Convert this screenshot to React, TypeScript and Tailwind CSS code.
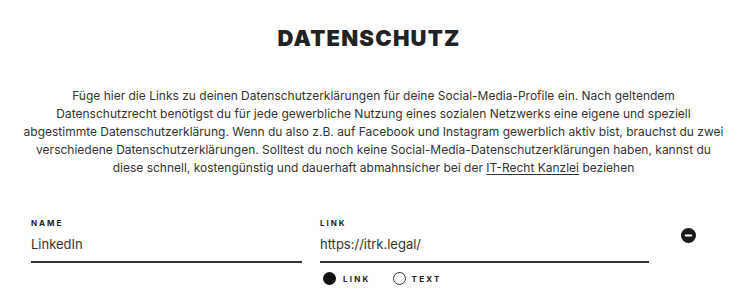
import React from "react";

function MinusCircle() {
  return (
    <svg width="15" height="15" viewBox="0 0 16 16" aria-hidden="true">
      <circle cx="8" cy="8" r="8" fill="#1a1a1a" />
      <rect x="4" y="6.9" width="8" height="2.2" rx="1" fill="#ffffff" />
    </svg>
  );
}

export default function App() {
  return (
    <div className="w-[747px] h-[308px] overflow-hidden bg-white font-['Inter',_'Liberation_Sans',_sans-serif] text-[#333]">
      <h1 className="pt-[26px] pr-[9px] text-center text-[22px] leading-[24px] font-black tracking-[0.055em] text-[#222]">
        DATENSCHUTZ
      </h1>
      <p className="mt-[37px] text-center text-[12px] leading-[18px] text-[#333]">
        Füge hier die Links zu deinen Datenschutzerklärungen für deine Social-Media-Profile ein. Nach geltendem
        <br />
        Datenschutzrecht benötigst du für jede gewerbliche Nutzung eines sozialen Netzwerks eine eigene und speziell
        <br />
        abgestimmte Datenschutzerklärung. Wenn du also z.B. auf Facebook und Instagram gewerblich aktiv bist, brauchst du zwei
        <br />
        verschiedene Datenschutzerklärungen. Solltest du noch keine Social-Media-Datenschutzerklärungen haben, kannst du
        <br />
        diese schnell, kostengünstig und dauerhaft abmahnsicher bei der{" "}
        <a className="underline underline-offset-2">IT-Recht Kanzlei</a> beziehen
      </p>
      <div className="mt-[40px] flex pl-[31px]">
        <div className="w-[271px]">
          <div className="text-[8px] leading-[12px] font-bold tracking-[0.25em] text-[#222]">NAME</div>
          <div className="mt-[5px] border-b-2 border-[#333] pb-[7px] text-[13px] leading-[20px] text-[#333]">
            LinkedIn
          </div>
        </div>
        <div className="ml-[18px] w-[329px]">
          <div className="text-[8px] leading-[12px] font-bold tracking-[0.25em] text-[#222]">LINK</div>
          <div className="mt-[5px] border-b-2 border-[#333] pb-[7px] text-[13px] leading-[20px] text-[#333]">
            https://itrk.legal/
          </div>
          <div className="mt-[9px] flex items-center pl-[3px]">
            <span className="h-[13px] w-[13px] rounded-full bg-[#111]" />
            <span className="ml-[7px] text-[8px] leading-[12px] font-bold tracking-[0.28em] text-[#222]">LINK</span>
            <span className="ml-[22px] h-[13px] w-[13px] rounded-full border-[1.5px] border-[#333]" />
            <span className="ml-[6px] text-[8px] leading-[12px] font-bold tracking-[0.28em] text-[#222]">TEXT</span>
          </div>
        </div>
        <div className="ml-[32px] mt-[11px]">
          <MinusCircle />
        </div>
      </div>
    </div>
  );
}
